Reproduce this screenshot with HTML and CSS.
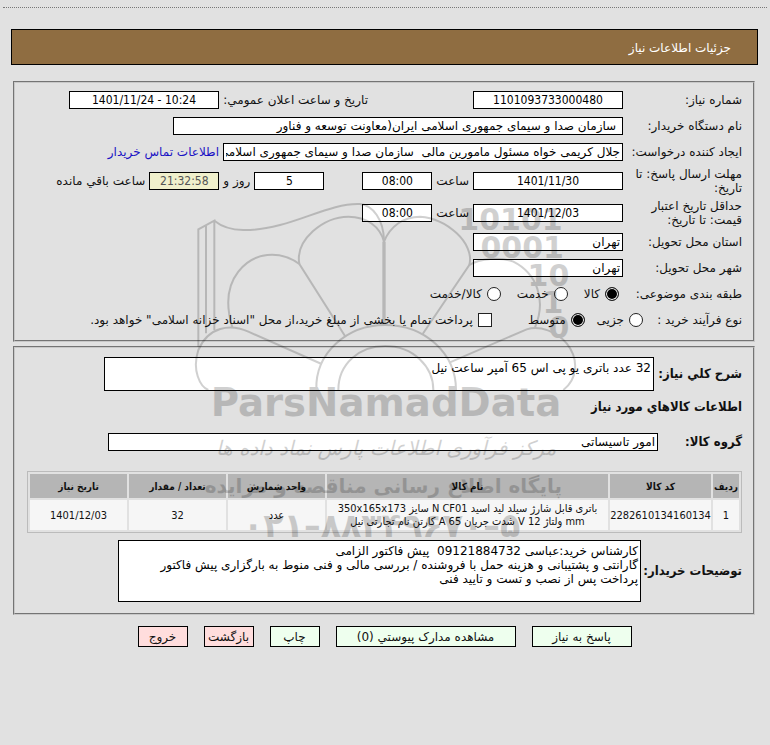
FILE: index.html
```html
<!DOCTYPE html>
<html lang="fa" dir="rtl">
<head>
  <meta charset="UTF-8" />
  <meta name="viewport" content="width=device-width, initial-scale=1" />
  <title>جزئیات اطلاعات نیاز</title>
  <link rel="stylesheet" href="styles.css">
</head>
<body>

  <header class="title-bar"><h1>جزئیات اطلاعات نیاز</h1></header>

  <form>
    <section class="panel need-info">
      <div class="row">
        <label class="caption" for="need-no">شماره نیاز:</label>
        <input class="box wide num" id="need-no" type="text" dir="ltr" value="1101093733000480" readonly>
        <label class="caption announce" for="announce">تاریخ و ساعت اعلان عمومي:</label>
        <input class="box wide num" id="announce" type="text" dir="ltr" value="1401/11/24 - 10:24" readonly>
      </div>
      <div class="row">
        <label class="caption" for="buyer">نام دستگاه خریدار:</label>
        <input class="box buyer" id="buyer" type="text" value=" سازمان صدا و سیمای جمهوری اسلامی ایران(معاونت توسعه و فناور" readonly>
      </div>
      <div class="row">
        <label class="caption" for="creator">ایجاد کننده درخواست:</label>
        <input class="box creator" id="creator" type="text" value="جلال کریمی خواه مسئول مامورین مالی  سازمان صدا و سیمای جمهوری اسلامی ایران" readonly>
        <a class="link" href="#">اطلاعات تماس خریدار</a>
      </div>
      <div class="row tall">
        <label class="caption" for="answer-date">مهلت ارسال پاسخ: تا تاریخ:</label>
        <input class="box wide num" id="answer-date" type="text" dir="ltr" value="1401/11/30" readonly>
        <label for="answer-time">ساعت</label>
        <input class="box short num" id="answer-time" type="text" dir="ltr" value="08:00" readonly>
        <input class="box short num days" id="days" type="text" value="5" readonly>
        <label for="days">روز و</label>
        <input class="box short num countdown" id="left" type="text" dir="ltr" value="21:32:58" readonly>
        <label for="left">ساعت باقي مانده</label>
      </div>
      <div class="row tall">
        <label class="caption" for="valid-date">حداقل تاریخ اعتبار قیمت: تا تاریخ:</label>
        <input class="box wide num" id="valid-date" type="text" dir="ltr" value="1401/12/03" readonly>
        <label for="valid-time">ساعت</label>
        <input class="box short num" id="valid-time" type="text" dir="ltr" value="08:00" readonly>
      </div>
      <div class="row">
        <label class="caption" for="province">استان محل تحویل:</label>
        <input class="box wide" id="province" type="text" value="تهران" readonly>
      </div>
      <div class="row">
        <label class="caption" for="city">شهر محل تحویل:</label>
        <input class="box wide" id="city" type="text" value="تهران" readonly>
      </div>
      <div class="row">
        <span class="caption">طبقه بندی موضوعی:</span>
        <div class="options">
          <label class="option"><input type="radio" name="kind" checked>کالا</label>
          <label class="option"><input type="radio" name="kind">خدمت</label>
          <label class="option"><input type="radio" name="kind">کالا/خدمت</label>
        </div>
      </div>
      <div class="row">
        <span class="caption process">نوع فرآیند خرید :</span>
        <label class="option"><input type="radio" name="process">جزیی</label>
        <label class="option medium"><input type="radio" name="process" checked>متوسط</label>
        <label class="option treasury"><input type="checkbox">پرداخت تمام یا بخشی از مبلغ خرید،از محل "اسناد خزانه اسلامی" خواهد بود.</label>
      </div>
    </section>

    <section class="panel goods-info">
      <div class="row block">
        <label class="strong" for="summary">شرح کلي نیاز:</label>
        <textarea class="box summary" id="summary" readonly>32 عدد باتری یو پی اس 65 آمپر ساعت نیل</textarea>
      </div>
      <h2 class="strong heading">اطلاعات کالاهاي مورد نیاز</h2>
      <div class="row group-row">
        <label class="strong group-label" for="group">گروه کالا:</label>
        <input class="box group" id="group" type="text" value="امور تاسیساتی" readonly>
      </div>
      <table class="goods">
        <colgroup>
          <col class="c-row"><col class="c-code"><col class="c-name"><col><col><col>
        </colgroup>
        <thead>
          <tr>
            <th>ردیف</th>
            <th>کد کالا</th>
            <th>نام کالا</th>
            <th>واحد شمارش</th>
            <th>تعداد / مقدار</th>
            <th>تاریخ نیاز</th>
          </tr>
        </thead>
        <tbody>
          <tr>
            <td>1</td>
            <td>2282610134160134</td>
            <td>باتری قابل شارژ سیلد لید اسید N CF01 سایز 350x165x173<br>mm ولتاژ 12 V شدت جریان 65 A کارتن نام تجارتی نیل</td>
            <td>عدد</td>
            <td>32</td>
            <td>1401/12/03</td>
          </tr>
        </tbody>
      </table>
      <div class="row block">
        <label class="strong notes-label" for="notes">توضیحات خریدار:</label>
        <textarea class="box notes" id="notes" readonly>کارشناس خرید:عباسی 09121884732  پیش فاکتور الزامی
گارانتی و پشتیبانی و هزینه حمل با فروشنده / بررسی مالی و فنی منوط به بارگزاری پیش فاکتور پرداخت پس از نصب و تست و تایید فنی</textarea>
      </div>
    </section>

    <div class="actions">
      <button class="btn answer" type="button">پاسخ به نیاز</button>
      <button class="btn docs" type="button">مشاهده مدارک پیوستي (0)</button>
      <button class="btn" type="button">چاپ</button>
      <button class="btn red" type="button">بازگشت</button>
      <button class="btn red" type="button">خروج</button>
    </div>
  </form>

  <svg class="watermark" viewBox="0 0 1200 1080" aria-hidden="true">
    <g fill="none" stroke="#000" stroke-width="6">
      <path d="M55 470V118L103 92V420M78 106V430" />
      <path d="M103 92C150 130 220 125 300 105S470 38 540 42C580 46 610 90 612 150" />
      <path d="M425 522L205 425C150 400 85 410 55 480C35 540 60 590 85 600" />
      <path d="M495 438L358 222C300 180 220 185 175 245C140 290 138 350 157 412" />
      <path d="M358 222C345 150 430 80 505 80C560 80 600 110 612 155C630 110 670 80 720 80C800 85 885 160 868 225" />
      <path d="M612 155V405" stroke-width="10" />
      <path d="M728 432L868 225C900 205 960 200 1000 215C1070 250 1100 330 1065 412" />
      <path d="M808 518L1040 418C1080 405 1130 425 1160 460C1200 510 1190 570 1150 600" />
      <path d="M409 600C405 490 500 405 615 405C735 405 828 490 828 600" />
      <path d="M475 600C475 520 540 468 615 468C700 468 760 530 760 600" />
    </g>
    <g class="mark-bits">
      <text x="1148" y="120">10101</text>
      <text x="1152" y="205">0001</text>
      <text x="1168" y="288">10</text>
      <text x="1150" y="370">1</text>
      <text x="1168" y="445">0</text>
    </g>
    <text class="mark-name" x="618" y="678">ParsNamadData</text>
    <text class="mark-script" x="618" y="795">مرکز فرآوری اطلاعات پارس نماد داده ها</text>
    <text class="mark-site" x="610" y="910">پایگاه اطلاع رسانی مناقصه و مزایده</text>
    <text class="mark-phone" x="605" y="1040">۰۲۱–۸۸۳۴۹۶۷۰–۵</text>
  </svg>

</body>
</html>
```
FILE: styles.css
```css
* {
  box-sizing: border-box;
}
body {
  position: relative;
  margin: 7px 3px 0;
  border-top: 1px dotted #777;
  padding: 21px 9px 0 8px;
  background-color: #e1e1e1;
  color: #111;
  font-family: "DejaVu Sans", sans-serif;
  font-size: 12px;
  line-height: 14px;
}
.title-bar {
  height: 36px;
  padding: 10px 26px;
  border: 1px solid #000;
  background-color: #8f6d41;
}
.title-bar h1 {
  margin: 0;
  color: #fff;
  font-size: 12px;
  font-weight: normal;
  line-height: 16px;
}
.panel {
  border: 2px groove #c8c8c8;
  margin: 0 3px 0 2px;
  padding: 4px 11px 7px 12px;
}
.need-info {
  margin-top: 16px;
}
.goods-info {
  margin-top: 4px;
  padding: 9px 11px 11px 12px;
}
.row {
  display: flex;
  align-items: center;
  gap: 4px;
  min-height: 26px;
  white-space: nowrap;
}
.row.tall {
  min-height: 32px;
}
.caption {
  flex: none;
  width: 115px;
}
.tall .caption {
  white-space: normal;
}
.announce {
  width: 145px;
  margin-right: 101px;
}
.process {
  width: 95px;
}
.box {
  height: 18px;
  border: 1px solid #000;
  padding: 0 2px;
  background-color: #fff;
  color: #000;
  font: inherit;
}
.num {
  text-align: center;
  font-family: "DejaVu Sans Condensed", "DejaVu Sans", sans-serif;
}
.wide {
  width: 150px;
}
.short {
  width: 70px;
}
.buyer {
  width: 450px;
}
.creator {
  width: 400px;
}
.days {
  margin-right: 34px;
}
.countdown {
  background-color: #f0f0cc;
  color: #555;
}
.link {
  color: #1a12c4;
  text-decoration: none;
}
.options {
  display: flex;
  gap: 16px;
  padding-right: 4px;
}
.option {
  display: flex;
  align-items: center;
  gap: 5px;
}
.medium {
  margin-right: 8px;
}
.treasury {
  margin-right: 32px;
}
input[type="radio"],
input[type="checkbox"] {
  appearance: none;
  width: 14px;
  height: 14px;
  margin: 0;
  border: 1px solid #222;
  background-color: #fff;
}
input[type="radio"] {
  border-radius: 50%;
}
input[type="radio"]:checked {
  background-color: #000;
  box-shadow: inset 0 0 0 1px #fff;
}
textarea.box {
  display: block;
  resize: none;
  overflow: hidden;
}
.strong {
  margin: 0;
  font-family: "DejaVu Sans Condensed", "DejaVu Sans", sans-serif;
  font-size: 13px;
  font-weight: bold;
}
.summary {
  width: 550px;
  height: 34px;
  padding-top: 3px;
}
.block .strong {
  flex: none;
  width: 84px;
}
.heading {
  padding-top: 9px;
}
.group-row {
  margin-top: 15px;
}
.group-label {
  width: 80px;
}
.group {
  width: 550px;
}
.goods {
  width: 100%;
  margin: 16px 0 7px;
  border: 1px solid #bbb;
  border-spacing: 2px;
  table-layout: fixed;
  font-family: "DejaVu Sans Condensed", "DejaVu Sans", sans-serif;
  font-size: 11px;
  line-height: 13px;
  text-align: center;
}
.goods th,
.goods td {
  padding: 0;
  white-space: nowrap;
}
.goods th {
  height: 24px;
  background-color: #b5b5b5;
  font-size: 10px;
}
.goods td {
  height: 30px;
  background-color: #f6f6f6;
}
.c-row {
  width: 26px;
}
.c-code {
  width: 101px;
}
.c-name {
  width: 281px;
}
.block .notes-label {
  width: 97px;
}
.notes {
  width: 523px;
  height: 62px;
  padding-top: 3px;
}
.actions {
  display: flex;
  justify-content: center;
  gap: 16px;
  margin-top: 11px;
}
.btn {
  width: 50px;
  height: 21px;
  border: 1px solid #000;
  padding: 0;
  background-color: #eeffee;
  color: #111;
  font: inherit;
  cursor: pointer;
}
.btn.answer {
  width: 100px;
}
.btn.docs {
  width: 180px;
}
.btn.red {
  background-color: #ffdddd;
}
.watermark {
  position: absolute;
  top: 182px;
  left: 50%;
  width: 400px;
  height: 360px;
  margin-left: -205px;
  opacity: 0.18;
  pointer-events: none;
}
.watermark text {
  direction: ltr;
  text-anchor: middle;
  font-family: "DejaVu Sans", sans-serif;
}
.watermark .mark-bits text {
  font-size: 90px;
  font-weight: bold;
  text-anchor: end;
}
.watermark .mark-name {
  font-size: 116px;
  font-weight: bold;
}
.watermark .mark-script {
  direction: rtl;
  font-size: 60px;
  font-style: italic;
}
.watermark .mark-site {
  direction: rtl;
  font-size: 60px;
  font-weight: bold;
}
.watermark .mark-phone {
  font-size: 100px;
  font-weight: bold;
}
```
